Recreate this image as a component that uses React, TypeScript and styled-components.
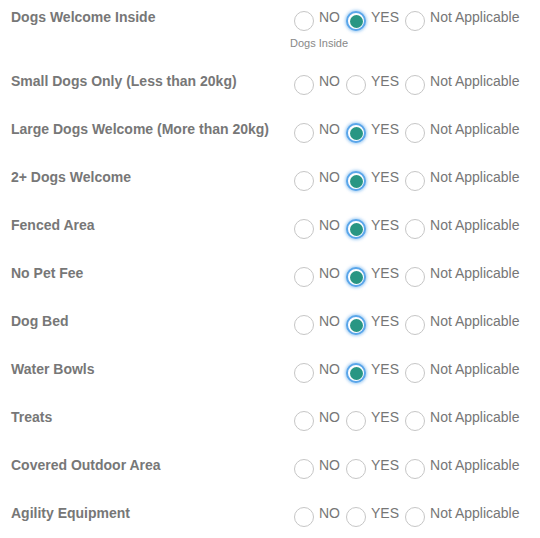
import React, { useState } from 'react';
import styled, { createGlobalStyle } from 'styled-components';

const GlobalStyle = createGlobalStyle`
  html, body {
    margin: 0;
    padding: 0;
    background: #ffffff;
  }
  body {
    font-family: "Liberation Sans", Arial, sans-serif;
  }
`;

const Form = styled.div`
  padding: 7px 0 0 11px;
  width: 540px;
  box-sizing: border-box;
`;

const Row = styled.div`
  display: grid;
  grid-template-columns: 279px 1fr;
  margin-bottom: 20px;
`;

const Label = styled.div`
  font-size: 14px;
  font-weight: 700;
  line-height: 20px;
  color: #777777;
`;

const Field = styled.div`
  display: flex;
  flex-direction: column;
`;

const Options = styled.div`
  display: flex;
  gap: 2px;
  height: 28px;
`;

const Option = styled.label`
  display: flex;
  align-items: flex-start;
  cursor: pointer;
`;

const Radio = styled.span<{ $checked: boolean }>`
  position: relative;
  width: 20px;
  height: 20px;
  margin: 4px 5px 0 4px;
  box-sizing: border-box;
  border-radius: 50%;
  background: #ffffff;
  border: ${({ $checked }) => ($checked ? '2px solid #5aa6ea' : '1.5px solid #c6c6c6')};
  box-shadow: ${({ $checked }) => ($checked ? '0 0 3px 1px rgba(90, 166, 234, 0.55)' : 'none')};

  &::after {
    content: '';
    display: ${({ $checked }) => ($checked ? 'block' : 'none')};
    position: absolute;
    inset: 1.5px;
    border-radius: 50%;
    background: #289683;
  }
`;

const OptionText = styled.span`
  font-size: 14px;
  line-height: 20px;
  color: #767676;
`;

const SubLabel = styled.div`
  font-size: 11px;
  line-height: 15px;
  margin-top: 1px;
  color: #888888;
`;

type Choice = 'NO' | 'YES' | 'Not Applicable';

interface Question {
  label: string;
  sub?: string;
  value?: Choice;
}

const questions: Question[] = [
  { label: 'Dogs Welcome Inside', sub: 'Dogs Inside', value: 'YES' },
  { label: 'Small Dogs Only (Less than 20kg)' },
  { label: 'Large Dogs Welcome (More than 20kg)', value: 'YES' },
  { label: '2+ Dogs Welcome', value: 'YES' },
  { label: 'Fenced Area', value: 'YES' },
  { label: 'No Pet Fee', value: 'YES' },
  { label: 'Dog Bed', value: 'YES' },
  { label: 'Water Bowls', value: 'YES' },
  { label: 'Treats' },
  { label: 'Covered Outdoor Area' },
  { label: 'Agility Equipment' },
];

const choices: Choice[] = ['NO', 'YES', 'Not Applicable'];

const App = () => {
  const [answers, setAnswers] = useState<(Choice | undefined)[]>(questions.map(q => q.value));

  const pick = (i: number, c: Choice) => {
    setAnswers(prev => prev.map((a, j) => (j === i ? c : a)));
  };

  return (
    <>
      <GlobalStyle />
      <Form>
        {questions.map((q, i) => (
          <Row key={q.label}>
            <Label>{q.label}</Label>
            <Field>
              <Options>
                {choices.map(c => (
                  <Option key={c} onClick={() => pick(i, c)}>
                    <Radio $checked={answers[i] === c} />
                    <OptionText>{c}</OptionText>
                  </Option>
                ))}
              </Options>
              {q.sub && <SubLabel>{q.sub}</SubLabel>}
            </Field>
          </Row>
        ))}
      </Form>
    </>
  );
};

export default App;
